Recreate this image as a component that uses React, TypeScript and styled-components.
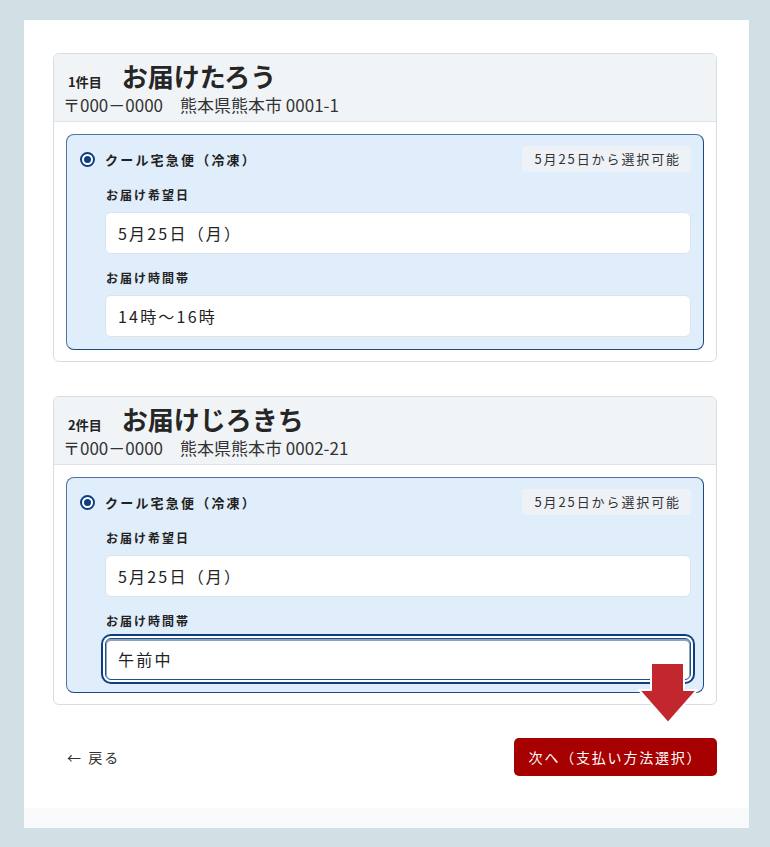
import * as React from 'react';
import styled, { createGlobalStyle } from 'styled-components';

const GlobalStyle = createGlobalStyle`
  html, body {
    margin: 0;
    padding: 0;
    background: #d0e0e5;
  }
  body {
    font-family: "Noto Sans", "Noto Sans CJK JP", sans-serif;
    color: #222;
  }
`;

const Page = styled.div`
  padding: 20px 21px 19px 24px;
`;

const Panel = styled.main`
  background: linear-gradient(to bottom, #fff calc(100% - 20px), #f7f9fa calc(100% - 20px));
  padding: 33px 32px 52px 29px;
  display: flex;
  flex-direction: column;
  gap: 34px;
`;

const Card = styled.section`
  border: 1px solid #d9dde2;
  border-radius: 6px;
  background: #fff;
  overflow: hidden;
`;

const CardHeader = styled.header`
  background: #f1f4f7;
  border-bottom: 1px solid #dfe3e7;
  padding: 4px 14px 5px;
`;

const TitleRow = styled.div`
  display: flex;
  align-items: baseline;
  gap: 20px;
`;

const Count = styled.span`
  font-family: "Noto Sans CJK JP", sans-serif;
  font-size: 13px;
  font-weight: 700;
`;

const Name = styled.h2`
  margin: 0;
  font-family: "Noto Sans CJK JP", sans-serif;
  font-size: 26px;
  font-weight: 700;
  line-height: 36px;
  color: #262626;
`;

const Address = styled.div`
  font-family: "Noto Sans CJK JP", sans-serif;
  font-size: 17px;
  line-height: 22px;
  color: #333;
  margin-left: -5px;
  white-space: pre;
`;

const CardBody = styled.div`
  padding: 12px 12px 11px 12px;
`;

const Option = styled.div`
  background: #e0edfb;
  border: 1px solid #4e74a3;
  border-bottom-color: #1d4a80;
  border-right-color: #1d4a80;
  border-radius: 8px;
  padding: 11px 12px 12px 13px;
`;

const OptionHead = styled.div`
  display: flex;
  align-items: center;
  height: 26px;
`;

const Radio = styled.span`
  width: 15px;
  height: 15px;
  box-sizing: border-box;
  border: 2px solid #0d3f7f;
  border-radius: 50%;
  background: #fff;
  display: inline-flex;
  align-items: center;
  justify-content: center;
  margin-right: 10px;
  &::after {
    content: '';
    width: 7px;
    height: 7px;
    border-radius: 50%;
    background: #0d3f7f;
  }
`;

const OptionLabel = styled.span`
  font-family: "Noto Sans CJK JP", sans-serif;
  font-size: 13px;
  font-weight: 700;
  letter-spacing: 2.2px;
  flex: 1;
`;

const Badge = styled.span`
  background: #eef2f7;
  border-radius: 4px;
  font-family: "Noto Sans CJK JP", sans-serif;
  font-size: 13px;
  letter-spacing: 1.9px;
  color: #333;
  padding: 0 10px 0 12px;
  height: 26px;
  line-height: 26px;
`;

const Fields = styled.div`
  padding-left: 25px;
  padding-top: 14px;
  display: flex;
  flex-direction: column;
`;

const FieldLabel = styled.label`
  font-family: "Noto Sans CJK JP", sans-serif;
  font-size: 12px;
  font-weight: 700;
  letter-spacing: 2px;
  line-height: 18px;
  margin-left: 1px;
  margin-bottom: 8px;
`;

const Select = styled.div<{ $focused?: boolean }>`
  height: 42px;
  box-sizing: border-box;
  background: #fff;
  border-radius: 6px;
  border: 1px solid ${(p) => (p.$focused ? '#1d4f8a' : '#dde3ea')};
  box-shadow: ${(p) =>
    p.$focused ? 'inset 0 1px 0 1px #8fa3bb, 0 0 0 2px #fff, 0 0 0 4px #0c3f7e' : 'none'};
  padding: 0 12px;
  display: flex;
  align-items: center;
  font-family: "Noto Sans CJK JP", sans-serif;
  font-size: 16px;
  letter-spacing: 2.2px;
  color: #222;
  margin-bottom: 15px;
  &:last-child {
    margin-bottom: 0;
  }
`;

const Footer = styled.div`
  display: flex;
  justify-content: space-between;
  align-items: center;
  margin-top: -1px;
`;

const BackLink = styled.a`
  font-family: "Noto Sans CJK JP", sans-serif;
  font-size: 14px;
  letter-spacing: 2px;
  color: #333;
  margin-left: 14px;
  text-decoration: none;
`;

const NextWrap = styled.div`
  position: relative;
`;

const NextButton = styled.button`
  width: 203px;
  height: 38px;
  border: none;
  border-radius: 5px;
  background: #a60000;
  color: #fff;
  font-family: "Noto Sans CJK JP", sans-serif;
  font-size: 14px;
  letter-spacing: 1.8px;
  cursor: pointer;
`;

const Arrow = styled.svg`
  position: absolute;
  right: 18px;
  bottom: calc(100% + 14px);
`;

type Delivery = {
  no: number;
  name: string;
  address: string;
  date: string;
  time: string;
  focused?: boolean;
};

const deliveries: Delivery[] = [
  { no: 1, name: 'お届けたろう', address: '〒000－0000　熊本県熊本市 0001-1', date: '5月25日（月）', time: '14時～16時' },
  { no: 2, name: 'お届けじろきち', address: '〒000－0000　熊本県熊本市 0002-21', date: '5月25日（月）', time: '午前中', focused: true },
];

function DeliveryCard({ d }: { d: Delivery }) {
  return (
    <Card>
      <CardHeader>
        <TitleRow>
          <Count>{d.no}件目</Count>
          <Name>{d.name}</Name>
        </TitleRow>
        <Address>{d.address}</Address>
      </CardHeader>
      <CardBody>
        <Option>
          <OptionHead>
            <Radio />
            <OptionLabel>クール宅急便（冷凍）</OptionLabel>
            <Badge>5月25日から選択可能</Badge>
          </OptionHead>
          <Fields>
            <FieldLabel>お届け希望日</FieldLabel>
            <Select>{d.date}</Select>
            <FieldLabel>お届け時間帯</FieldLabel>
            <Select $focused={d.focused}>{d.time}</Select>
          </Fields>
        </Option>
      </CardBody>
    </Card>
  );
}

export default function App(): JSX.Element {
  return (
    <Page>
      <GlobalStyle />
      <Panel>
        {deliveries.map((d) => (
          <DeliveryCard key={d.no} d={d} />
        ))}
        <Footer>
          <BackLink href="#">← 戻る</BackLink>
          <NextWrap>
            <NextButton>次へ（支払い方法選択）</NextButton>
            <Arrow width="62" height="62" viewBox="0 0 62 62">
              <path
                d="M14 1 H47 V28 H60 L31 61 L2 28 H14 Z"
                fill="#c1272d"
                stroke="#fff"
                strokeWidth="2"
                strokeLinejoin="round"
              />
            </Arrow>
          </NextWrap>
        </Footer>
      </Panel>
    </Page>
  );
}
